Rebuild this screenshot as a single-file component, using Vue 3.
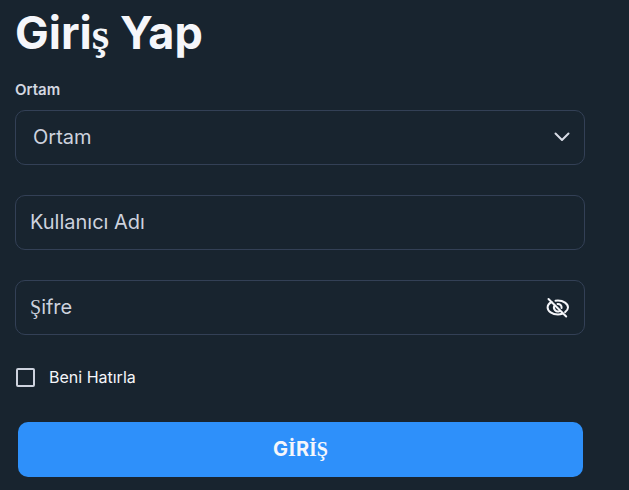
<script setup>
import { ref } from 'vue'

const environment = ref('')
const username = ref('')
const password = ref('')
const remember = ref(false)
const showPassword = ref(false)
</script>

<template>
  <main class="page">
    <form class="login" @submit.prevent>
      <h1 class="title">Giri<span class="serif">ş</span> Yap</h1>

      <label class="caption" for="environment">Ortam</label>
      <div class="field">
        <select id="environment" v-model="environment" class="control select">
          <option value="">Ortam</option>
        </select>
        <svg class="chevron" viewBox="0 0 18 18" aria-hidden="true">
          <path d="M2.5 5.5 9 12l6.500-6.500" />
        </svg>
      </div>

      <div class="field">
        <input id="username" v-model="username" class="control" type="text" autocomplete="username" />
        <label v-show="!username" class="hint" for="username">Kullanıcı Adı</label>
      </div>

      <div class="field">
        <input
          id="password"
          v-model="password"
          class="control"
          :type="showPassword ? 'text' : 'password'"
          autocomplete="current-password"
        />
        <label v-show="!password" class="hint" for="password"><span class="serif">Ş</span>ifre</label>
        <button class="reveal" type="button" @click="showPassword = !showPassword">
          <svg viewBox="0 0 24 24" aria-hidden="true">
            <path d="M9.500 4.800c.8-.2 1.600-.3 2.400-.3 5.600 0 10.100 3.400 10.100 7 0 1.700-1.100 3.300-2.900 4.600" />
            <path d="M5.600 6C3.100 7.300 1.600 9.400 1.600 11.500c0 3.600 4.600 7 10.300 7 1.500 0 2.900-.2 4.200-.7" />
            <path d="M11.600 7.900a3.700 3.700 0 0 1 4 4.100M8.600 9.500a3.800 3.800 0 0 0 5.200 5.300" />
            <path d="M2.500 3l17.700 17.500" />
          </svg>
        </button>
      </div>

      <label class="remember">
        <input v-model="remember" class="box" type="checkbox" />
        <span>Beni Hatırla</span>
      </label>

      <button class="submit" type="submit">G<span class="serif">İ</span>R<span class="serif">İŞ</span></button>
    </form>
  </main>
</template>

<style>
body {
  background: #18242f;
}
</style>

<style scoped>
.page {
  padding: 5px 44px 12px 15px;
  color: #f5f6fa;
  font-family: Inter, "Liberation Sans", sans-serif;
}

.login {
  display: flex;
  flex-direction: column;
}

.serif {
  font-family: "Liberation Serif", serif;
}

.title {
  margin: 0;
  font-size: 45px;
  font-weight: 700;
  line-height: 56px;
}

.caption {
  margin: 18px 0 10px;
  color: #d3d7e0;
  font-size: 15px;
  font-weight: 600;
  line-height: 20px;
}

.field {
  display: grid;
  align-items: center;
  margin-bottom: 30px;
}

.field > * {
  grid-area: 1 / 1;
}

.control {
  box-sizing: border-box;
  width: 100%;
  height: 55px;
  margin: 0;
  padding: 0 56px 2px 14px;
  border: 1px solid #334056;
  border-radius: 10px;
  outline: none;
  appearance: none;
  background: transparent;
  color: #cdd2de;
  font-family: inherit;
  font-size: 20px;
}

.control:focus-visible {
  border-color: #2e90fa;
}

.select {
  padding-left: 17px;
}

.hint {
  justify-self: start;
  padding: 0 0 2px 15px;
  color: #cdd2de;
  font-size: 20px;
  line-height: 24px;
  pointer-events: none;
}

.chevron {
  justify-self: end;
  width: 18px;
  height: 18px;
  margin-right: 14px;
  padding-bottom: 2px;
  pointer-events: none;
}

.chevron path,
.reveal path {
  fill: none;
  stroke: #d8dce6;
  stroke-width: 2;
  stroke-linecap: round;
  stroke-linejoin: round;
}

.reveal {
  display: flex;
  justify-self: end;
  margin-right: 15px;
  padding: 0;
  border: 0;
  background: none;
  cursor: pointer;
}

.reveal svg {
  width: 24px;
  height: 24px;
}

.reveal path {
  stroke: #f5f6fa;
}

.remember {
  display: flex;
  align-items: center;
  align-self: flex-start;
  gap: 14px;
  margin-bottom: 33px;
  font-size: 16px;
  line-height: 24px;
}

.box {
  box-sizing: border-box;
  width: 19px;
  height: 19px;
  margin: 0 0 0 1px;
  border: 2px solid #cdd2de;
  border-radius: 2px;
  appearance: none;
}

.box:checked {
  background: #2e90fa;
}

.submit {
  height: 55px;
  margin: 0 2px 0 3px;
  padding: 0 0 1px;
  border: 0;
  border-radius: 10px;
  background: #2e90fa;
  color: #f5f6fa;
  font-family: inherit;
  font-size: 20px;
  font-weight: 700;
  cursor: pointer;
}
</style>
